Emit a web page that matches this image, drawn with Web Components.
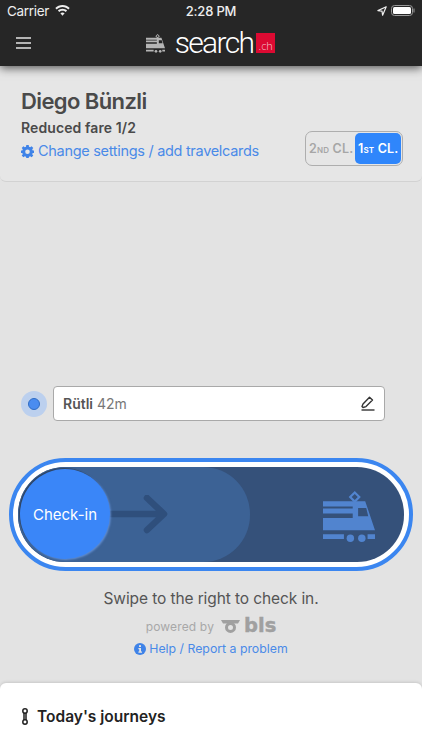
<!DOCTYPE html>
<html>
<head>
<meta charset="utf-8">
<title>Check-in</title>
<style>
    html, body { margin: 0; height: 100%; }
    body {
        width: 422px;
        height: 750px;
        overflow: hidden;
        display: flex;
        flex-direction: column;
        background: #e3e3e3;
        font-family: Inter, "Noto Sans", sans-serif;
    }
</style>
</head>
<body>
<app-header></app-header>
<profile-panel name="Diego Bünzli" fare="Reduced fare 1/2"></profile-panel>
<station-row name="Rütli" distance="42m"></station-row>
<swipe-slider label="Check-in"></swipe-slider>
<help-footer></help-footer>
<journeys-sheet>Today's journeys</journeys-sheet>

<script>
const TRAIN_ICON = `
    <path fill-rule="evenodd" d="M0 30H125L154 116H0ZM0 46V52H88V46ZM0 67V80H88V67ZM104 50V75H134L128 50Z"/>
    <path fill-rule="evenodd" d="M94 0L112 18L94 36L76 18ZM94 9L85 18L94 27L103 18Z"/>
    <path d="M0 128H62V142H0ZM132 128H154V142H132Z"/>
    <circle cx="81" cy="140" r="11"/><circle cx="115" cy="140" r="11"/>`;

class AppHeader extends HTMLElement {
    connectedCallback() {
        this.attachShadow({ mode: 'open' });
        this.shadowRoot.innerHTML = `
            <style>
                :host {
                    display: block;
                    flex: none;
                    height: 66px;
                    background: #262626;
                    color: #eee;
                    box-shadow: 0 2px 9px rgba(0, 0, 0, 0.65);
                    position: relative;
                    z-index: 2;
                }
                .status {
                    height: 21px;
                    display: grid;
                    grid-template-columns: 1fr auto 1fr;
                    align-items: center;
                    padding: 0 7px;
                    font-size: 13.5px;
                }
                .left, .right { display: flex; align-items: center; }
                .left { gap: 6px; letter-spacing: -0.3px; }
                .right { justify-content: flex-end; gap: 4px; }
                .time { font-size: 13px; font-weight: 500; letter-spacing: -0.2px; }
                .nav {
                    height: 44px;
                    display: grid;
                    grid-template-columns: 1fr auto 1fr;
                    align-items: center;
                    padding: 0 16px;
                }
                .burger { display: block; }
                .logo { display: flex; align-items: center; margin-left: -1px; }
                .train { fill: #b5b5b5; margin-right: 10px; }
                .word {
                    font-family: Roboto, sans-serif;
                    font-weight: 300;
                    font-size: 30px;
                    line-height: 30px;
                    letter-spacing: -1.7px;
                    color: #fff;
                }
                .ch {
                    margin-left: 3px;
                    width: 19px;
                    height: 20px;
                    background: #dc0a32;
                    color: #f3c6cf;
                    font-family: "Open Sans", sans-serif;
                    font-weight: 300;
                    font-size: 11px;
                    line-height: 25px;
                    text-align: center;
                }
            </style>
            <div class="status">
                <div class="left">
                    <span>Carrier</span>
                    <svg width="15" height="11" viewBox="0 0 15 11" fill="#eee">
                        <path d="M7.5 0C4.7 0 2.2 1.1 0.3 2.9L1.7 4.4C3.2 2.9 5.2 2 7.5 2S11.8 2.9 13.3 4.4L14.7 2.9C12.8 1.1 10.3 0 7.5 0Z"/>
                        <path d="M7.5 3.8C5.7 3.8 4.1 4.5 2.9 5.6L4.3 7C5.1 6.2 6.3 5.8 7.5 5.8S9.9 6.2 10.7 7L12.1 5.6C10.9 4.5 9.3 3.8 7.5 3.8Z"/>
                        <path d="M7.5 7.5C6.7 7.5 6 7.8 5.4 8.3L7.5 10.8L9.6 8.3C9 7.8 8.3 7.5 7.5 7.5Z"/>
                    </svg>
                </div>
                <div class="time">2:28 PM</div>
                <div class="right">
                    <svg width="10" height="10" viewBox="0 0 10 10" fill="none" stroke="#eee" stroke-width="1.2">
                        <path d="M9.2 0.8L0.9 4.6L5 5.2L5.6 9.2Z" stroke-linejoin="round"/>
                    </svg>
                    <svg width="24" height="11" viewBox="0 0 24 11">
                        <rect x="0.5" y="0.5" width="21" height="10" rx="3" fill="none" stroke="#999"/>
                        <rect x="2" y="2" width="18" height="7" rx="1.5" fill="#fff"/>
                        <rect x="22.5" y="3.5" width="1" height="4" fill="#999"/>
                    </svg>
                </div>
            </div>
            <div class="nav">
                <svg class="burger" width="15" height="12" viewBox="0 0 15 12" stroke="#e4e4e4" stroke-width="1.4">
                    <path d="M0 1H15M0 6H15M0 11H15"/>
                </svg>
                <div class="logo">
                    <svg class="train" width="19" height="19" viewBox="0 0 154 154">${TRAIN_ICON}</svg>
                    <span class="word">search</span>
                    <span class="ch">.ch</span>
                </div>
                <span></span>
            </div>
        `;
    }
}

class ClassToggle extends HTMLElement {
    connectedCallback() {
        this.attachShadow({ mode: 'open' });
        this.shadowRoot.innerHTML = `
            <style>
                :host {
                    display: flex;
                    width: 98px;
                    height: 35px;
                    box-sizing: border-box;
                    padding: 1px;
                    border: 1.5px solid #aeaeae;
                    border-radius: 7px;
                    font-size: 12.5px;
                    font-weight: 600;
                    letter-spacing: 0.2px;
                    white-space: nowrap;
                }
                div {
                    display: flex;
                    align-items: center;
                    justify-content: center;
                    border-radius: 5px;
                }
                .off { width: 49px; color: #a6a6a6; }
                .on { width: 46px; background: #2f86fb; color: #fff; }
                small { font-size: 8px; }
            </style>
            <div class="off"><span>2<small>ND</small> CL.</span></div>
            <div class="on"><span>1<small>ST</small> CL.</span></div>
        `;
    }
}

class ProfilePanel extends HTMLElement {
    connectedCallback() {
        this.attachShadow({ mode: 'open' });
        this.shadowRoot.innerHTML = `
            <style>
                :host {
                    display: flex;
                    flex: none;
                    height: 116px;
                    box-sizing: border-box;
                    padding: 22px 19px 0 21px;
                    justify-content: space-between;
                    background: #e6e6e6;
                    border-bottom: 1px solid #d2d2d2;
                    border-radius: 0 0 6px 6px;
                    color: #4a4a4a;
                }
                h1 { margin: 0; font-size: 22px; line-height: 27px; font-weight: 600; letter-spacing: -0.6px; }
                .fare { margin-top: 3px; font-size: 14px; line-height: 20px; font-weight: 600; letter-spacing: 0.1px; }
                .link {
                    display: flex;
                    align-items: center;
                    gap: 4px;
                    margin-top: 3px;
                    font-size: 14.5px;
                    line-height: 20px;
                    letter-spacing: -0.3px;
                    color: #4a8ae8;
                }
                class-toggle { margin-top: 43px; }
            </style>
            <div>
                <h1>${this.getAttribute('name')}</h1>
                <div class="fare">${this.getAttribute('fare')}</div>
                <div class="link">
                    <svg width="13" height="13" viewBox="0 0 13 13">
                        <path fill="#3f83e8" fill-rule="evenodd" d="M5.3 0H7.7L8 1.7L9.2 2.2L10.6 1.2L12.3 2.9L11.2 4.3L11.7 5.5L13 5.6V7.9L11.7 8.1L11.2 9.2L12.3 10.6L10.6 12.3L9.2 11.2L8 11.7L7.7 13H5.3L5 11.7L3.8 11.2L2.4 12.3L0.7 10.6L1.8 9.2L1.3 8.1L0 7.9V5.6L1.3 5.5L1.8 4.3L0.7 2.9L2.4 1.2L3.8 2.2L5 1.7ZM6.5 4.4A2.3 2.3 0 1 0 6.5 9A2.3 2.3 0 1 0 6.5 4.4Z"/>
                    </svg>
                    <span>Change settings / add travelcards</span>
                </div>
            </div>
            <class-toggle></class-toggle>
        `;
    }
}

class StationRow extends HTMLElement {
    connectedCallback() {
        this.attachShadow({ mode: 'open' });
        this.shadowRoot.innerHTML = `
            <style>
                :host {
                    display: flex;
                    flex: none;
                    align-items: center;
                    gap: 6px;
                    margin: 204px 37px 0 21px;
                }
                .dot {
                    flex: none;
                    width: 26px;
                    height: 26px;
                    border-radius: 50%;
                    background: #bcd0ee;
                    display: flex;
                    align-items: center;
                    justify-content: center;
                }
                .dot i {
                    width: 10px;
                    height: 10px;
                    border-radius: 50%;
                    background: #4a8cf0;
                    border: 1px solid #2f6cc4;
                }
                .field {
                    flex: 1;
                    height: 35px;
                    box-sizing: border-box;
                    display: flex;
                    align-items: center;
                    justify-content: space-between;
                    padding: 0 9px 0 9px;
                    background: #fff;
                    border: 1px solid #a9a9a9;
                    border-radius: 4px;
                    font-size: 14px;
                    color: #777;
                }
                b { color: #555; font-weight: 600; }
            </style>
            <div class="dot"><i></i></div>
            <div class="field">
                <span><b>${this.getAttribute('name')}</b> ${this.getAttribute('distance')}</span>
                <svg width="14" height="15" viewBox="0 0 14 15" fill="none" stroke="#333" stroke-width="1.4">
                    <path d="M1 10.5L2 8L8.5 1.2L11.5 4L5 10.6L2 11.5Z" stroke-linejoin="round"/>
                    <path d="M0.5 14H13.5"/>
                </svg>
            </div>
        `;
    }
}

class SwipeSlider extends HTMLElement {
    connectedCallback() {
        this.attachShadow({ mode: 'open' });
        this.shadowRoot.innerHTML = `
            <style>
                :host {
                    display: block;
                    flex: none;
                    height: 113px;
                    box-sizing: border-box;
                    margin: 37px 9px 0 9px;
                    border: 4.5px solid #3b86f0;
                    border-radius: 57px;
                    background: #fff;
                    padding: 5px;
                }
                .track {
                    position: relative;
                    height: 100%;
                    border-radius: 47px;
                    background: #35517a;
                    display: flex;
                    align-items: center;
                    justify-content: flex-end;
                    padding-right: 29px;
                    overflow: hidden;
                }
                .trail {
                    position: absolute;
                    left: 0;
                    top: 0;
                    bottom: 0;
                    width: 232px;
                    border-radius: 0 47px 47px 0;
                    background: #3c6295;
                }
                .arrow { position: absolute; left: 89px; top: 28px; }
                .knob {
                    position: absolute;
                    left: 2px;
                    top: 2px;
                    width: 90px;
                    height: 90px;
                    border-radius: 50%;
                    background: #3a86f8;
                    box-shadow: -1px -1px 1px rgba(38, 52, 74, 0.7), 1px 1px 2px rgba(120, 170, 250, 0.6);
                    display: flex;
                    align-items: center;
                    justify-content: center;
                    color: #fff;
                    font-size: 15px;
                }
                .train { fill: #5184cf; position: relative; margin-top: 4px; }
            </style>
            <div class="track">
                <div class="trail"></div>
                <svg class="arrow" width="70" height="40" viewBox="0 0 70 40" fill="none" stroke="#2f4f7c" stroke-width="6.5" stroke-linecap="round" stroke-linejoin="round">
                    <path d="M0 19H56M40 3L57 19L40 35"/>
                </svg>
                <div class="knob">${this.getAttribute('label')}</div>
                <svg class="train" width="52" height="52" viewBox="0 0 154 154">${TRAIN_ICON}</svg>
            </div>
        `;
    }
}

class HelpFooter extends HTMLElement {
    connectedCallback() {
        this.attachShadow({ mode: 'open' });
        this.shadowRoot.innerHTML = `
            <style>
                :host {
                    display: flex;
                    flex: none;
                    flex-direction: column;
                    align-items: center;
                    margin-top: 17px;
                    color: #555;
                }
                .hint { font-size: 15.5px; line-height: 22px; letter-spacing: -0.1px; }
                .powered {
                    display: flex;
                    align-items: center;
                    margin-top: 6px;
                    height: 20px;
                    font-size: 12px;
                    color: #a8a8a8;
                    letter-spacing: 0.15px;
                }
                .powered svg { margin: 0 4px 0 7px; }
                .bls {
                    font-family: "DejaVu Sans", sans-serif;
                    font-weight: 700;
                    font-size: 19.5px;
                    line-height: 20px;
                    letter-spacing: 0;
                    color: #a0a0a0;
                    -webkit-text-stroke: 0.4px #a0a0a0;
                }
                .help {
                    display: flex;
                    align-items: center;
                    gap: 3px;
                    margin-top: 3px;
                    font-size: 12.3px;
                    line-height: 20px;
                    color: #4a8ae8;
                }
            </style>
            <div class="hint">Swipe to the right to check in.</div>
            <div class="powered">
                <span>powered by</span>
                <svg width="19" height="13" viewBox="0 0 19 13" fill="none">
                    <path fill="#a0a0a0" d="M0 0H19L17 3.4H2Z"/>
                    <circle cx="9.5" cy="7.4" r="4" stroke="#a0a0a0" stroke-width="3"/>
                </svg>
                <span class="bls">bls</span>
            </div>
            <div class="help">
                <svg width="12" height="12" viewBox="0 0 12 12">
                    <circle cx="6" cy="6" r="6" fill="#3f83e8"/>
                    <rect x="5" y="2.2" width="2" height="1.8" fill="#e3e3e3"/>
                    <path d="M4.4 5H7V8.6H8V9.8H4.4V8.6H5.2V6.2H4.4Z" fill="#e3e3e3"/>
                </svg>
                <span>Help / Report a problem</span>
            </div>
        `;
    }
}

class JourneysSheet extends HTMLElement {
    connectedCallback() {
        this.attachShadow({ mode: 'open' });
        this.shadowRoot.innerHTML = `
            <style>
                :host {
                    display: flex;
                    flex: 1;
                    align-items: flex-start;
                    gap: 8px;
                    margin-top: 24px;
                    padding: 24px 21px 0 21px;
                    background: #fff;
                    border-radius: 6px 6px 0 0;
                    box-shadow: 0 -1px 3px rgba(0, 0, 0, 0.12);
                    font-size: 15.5px;
                    line-height: 20px;
                    font-weight: 600;
                    color: #222;
                }
                svg { margin-top: 1px; }
            </style>
            <svg width="8" height="17" viewBox="0 0 8 17" fill="none" stroke="#222" stroke-width="1.5">
                <circle cx="4" cy="3" r="2.2"/>
                <circle cx="4" cy="14" r="2.2"/>
                <path d="M3 5V12M5 5V12"/>
            </svg>
            <slot></slot>
        `;
    }
}

customElements.define('app-header', AppHeader);
customElements.define('class-toggle', ClassToggle);
customElements.define('profile-panel', ProfilePanel);
customElements.define('station-row', StationRow);
customElements.define('swipe-slider', SwipeSlider);
customElements.define('help-footer', HelpFooter);
customElements.define('journeys-sheet', JourneysSheet);
</script>
</body>
</html>
